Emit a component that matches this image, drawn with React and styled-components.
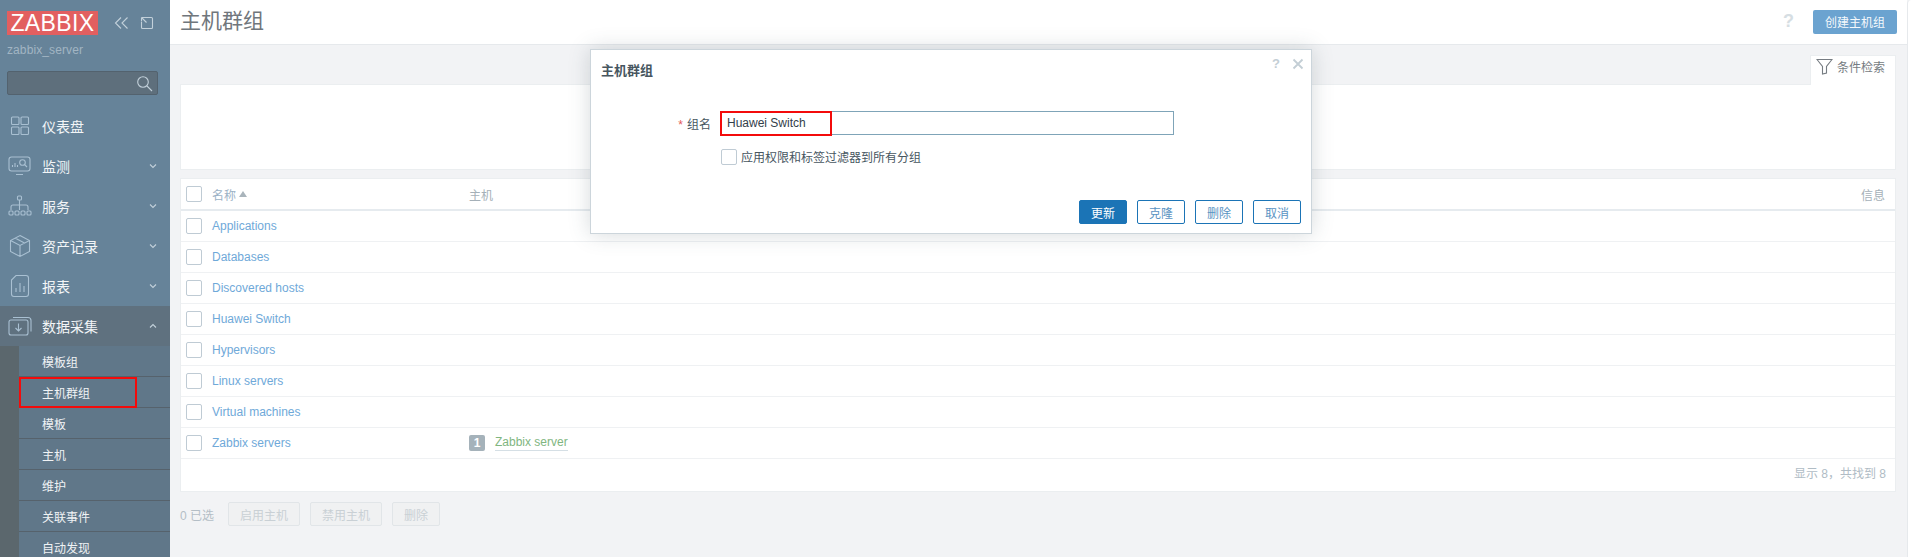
import React from "react";
import styled, { createGlobalStyle } from "styled-components";

const GlobalStyle = createGlobalStyle`
  html, body { margin: 0; padding: 0; height: 100%; overflow: hidden; }
  body { font-family: "Liberation Sans", "Noto Sans CJK SC", sans-serif; font-size: 12px; }
  * { box-sizing: border-box; }
`;

const Page = styled.div`
  position: relative;
  display: flex;
  width: 1911px;
  height: 557px;
  overflow: hidden;
  background: #f2f3f5;
`;

const Sidebar = styled.aside`
  width: 170px;
  flex: none;
  height: 557px;
  overflow: hidden;
  background: #668399;
  color: #fff;
`;
const LogoRow = styled.div`
  display: flex;
  align-items: center;
  padding: 11px 0 0 7px;
  height: 35px;
`;
const Logo = styled.div`
  width: 91px;
  height: 24px;
  background: #e25f60;
  color: #fff;
  font-size: 23px;
  line-height: 25px;
  text-align: center;
  letter-spacing: 0.4px;
  overflow: hidden;
`;
const LogoTools = styled.div`
  display: flex;
  gap: 11px;
  margin-left: 16px;
  color: #c2d0da;
`;
const ServerName = styled.div`
  margin: 8px 0 0 7px;
  font-size: 12px;
  line-height: 14px;
  color: #a2b5c3;
  letter-spacing: 0.1px;
`;
const SearchBox = styled.div`
  display: flex;
  align-items: center;
  justify-content: flex-end;
  width: 151px;
  height: 24px;
  margin: 14px 0 0 7px;
  padding-right: 4px;
  background: #5e6f7c;
  border: 1px solid #53626e;
  border-radius: 2px;
  color: #c2d0da;
`;
const Nav = styled.nav`
  margin-top: 11px;
`;
const NavItem = styled.div`
  display: flex;
  align-items: center;
  height: 40px;
  padding-left: 8px;
  background: ${(p) => (p.$active ? "#5f717f" : "transparent")};
  color: #f2f5f7;
  font-size: 14px;
`;
const NavIcon = styled.span`
  display: flex;
  justify-content: center;
  width: 24px;
  margin-right: 10px;
  color: #a9c0d2;
`;
const NavLabel = styled.span`
  flex: 1;
`;
const Caret = styled.span`
  display: flex;
  margin-right: 13px;
  color: #c2d0da;
`;
const SubMenu = styled.div`
  border-left: 19px solid #5b676d;
  background: #607789;
`;
const SubItem = styled.div`
  position: relative;
  display: flex;
  align-items: center;
  height: 31px;
  padding-left: 23px;
  border-bottom: 1px solid #56626c;
  color: #f0f3f5;
  font-size: 12px;
`;
const SideMark = styled.span`
  position: absolute;
  left: 0;
  top: 0;
  width: 118px;
  height: 31px;
  border: 2px solid #f30b0b;
`;

const Main = styled.main`
  flex: 1;
  display: flex;
  flex-direction: column;
  min-width: 0;
`;
const TopBar = styled.header`
  display: flex;
  align-items: center;
  height: 45px;
  padding: 0 10px 1px 10px;
  background: #fff;
  border-bottom: 1px solid #e6e9ec;
`;
const Title = styled.h1`
  flex: 1;
  margin: 0 0 2px;
  font-size: 21px;
  line-height: 30px;
  font-weight: 400;
  color: #70767c;
`;
const HelpMark = styled.span`
  margin-right: 19px;
  color: #d6dee3;
  font-size: 18px;
  font-weight: 700;
`;
const CreateButton = styled.button`
  width: 84px;
  height: 24px;
  padding: 0;
  border: 0;
  border-radius: 2px;
  background: #6ba3d0;
  color: #f5f9fc;
  font: inherit;
  font-size: 12px;
`;
const Content = styled.div`
  padding: 10px 11px 0 10px;
`;
const FilterTabRow = styled.div`
  display: flex;
  justify-content: flex-end;
`;
const FilterTab = styled.div`
  display: flex;
  align-items: center;
  gap: 4px;
  width: 86px;
  height: 30px;
  margin-bottom: -1px;
  padding: 0 0 8px 5px;
  background: #fff;
  border: 1px solid #ebeef0;
  border-bottom: 0;
  color: #767c82;
  font-size: 12px;
  z-index: 1;
`;
const FilterBody = styled.div`
  height: 86px;
  background: #fff;
  border: 1px solid #ebeef0;
`;
const Table = styled.section`
  margin-top: 8px;
  background: #fff;
  border: 1px solid #ebeef0;
`;
const HeadRow = styled.div`
  display: grid;
  grid-template-columns: 26px 257px 1fr auto;
  align-items: center;
  height: 32px;
  padding: 0 10px 0 5px;
  border-bottom: 2px solid #e6ebef;
  color: #a5b0b8;
`;
const Row = styled.div`
  display: grid;
  grid-template-columns: 26px 257px 1fr;
  align-items: center;
  height: 31px;
  padding: 0 10px 0 5px;
  border-bottom: 1px solid #eff1f3;
`;
const Check = styled.span`
  display: block;
  width: 16px;
  height: 16px;
  background: #fff;
  border: 1px solid #bfcbd4;
  border-radius: 2px;
`;
const SortName = styled.span`
  display: flex;
  align-items: center;
  gap: 3px;
  color: #9cb2c6;
`;
const SortArrow = styled.span`
  width: 0;
  height: 0;
  border: 4px solid transparent;
  border-top: 0;
  border-bottom: 6px solid #a9b4bb;
`;
const NameLink = styled.a`
  color: #6fa9d9;
`;
const HostCell = styled.span`
  display: flex;
  align-items: center;
  gap: 10px;
`;
const Count = styled.span`
  width: 16px;
  height: 16px;
  background: #a5b2ba;
  border-radius: 2px;
  color: #fff;
  font-weight: 700;
  line-height: 16px;
  text-align: center;
`;
const HostLink = styled.a`
  color: #7fb67f;
  border-bottom: 1px solid #d5dfe5;
  line-height: 15px;
`;
const Paging = styled.div`
  height: 32px;
  padding-right: 9px;
  color: #b0bcc5;
  line-height: 31px;
  text-align: right;
`;
const ActionBar = styled.div`
  display: flex;
  align-items: center;
  gap: 10px;
  margin-top: 10px;
  color: #b4bec6;
`;
const SelectedCount = styled.span`
  margin-right: 4px;
`;
const DisabledButton = styled.button`
  width: ${(p) => p.$w}px;
  height: 24px;
  padding: 0;
  background: #f0f1f2;
  border: 1px solid #e1e5e8;
  border-radius: 2px;
  color: #c9d0d5;
  font: inherit;
`;
const Scrollbar = styled.div`
  width: 4px;
  flex: none;
  background: #fff;
  border-left: 1px solid #e6e9ec;
  border-top-left-radius: 6px;
`;

const Dialog = styled.div`
  position: absolute;
  left: 590px;
  top: 49px;
  display: flex;
  flex-direction: column;
  width: 722px;
  height: 185px;
  background: #fff;
  border: 1px solid #ccd5db;
  box-shadow: 0 0 20px rgba(70, 85, 95, 0.22);
`;
const DialogHead = styled.div`
  position: relative;
  padding: 12px 10px 0;
  height: 44px;
`;
const DialogTitle = styled.h2`
  margin: 0;
  font-size: 13px;
  line-height: 17px;
  font-weight: 700;
  color: #47565f;
`;
const DialogTools = styled.div`
  position: absolute;
  right: 7px;
  top: 6px;
  display: flex;
  align-items: center;
  gap: 12px;
  color: #c3ced5;
`;
const DialogHelp = styled.span`
  font-size: 13px;
  font-weight: 700;
`;
const FormRow = styled.div`
  display: grid;
  grid-template-columns: 120px 454px;
  column-gap: 9px;
  align-items: center;
  margin-top: ${(p) => p.$top || 0}px;
`;
const Label = styled.label`
  color: #47565f;
  text-align: right;
`;
const Required = styled.span`
  color: #e45959;
  margin-right: 4px;
`;
const FieldWrap = styled.div`
  position: relative;
  height: 24px;
  padding: 0 6px;
  border: 1px solid #7fa4b8;
  color: #33404a;
  line-height: 22px;
`;
const FieldMark = styled.span`
  position: absolute;
  left: -1px;
  top: -1px;
  width: 112px;
  height: 25px;
  border: 2px solid #f30b0b;
`;
const CheckLabel = styled.span`
  display: flex;
  align-items: center;
  gap: 4px;
  padding-left: 1px;
  color: #47565f;
`;
const DialogFoot = styled.div`
  display: flex;
  justify-content: flex-end;
  gap: 10px;
  margin-top: auto;
  padding: 0 10px 9px 0;
`;
const DialogButton = styled.button`
  width: 48px;
  height: 24px;
  padding: 0;
  background: ${(p) => (p.$primary ? "#1b74b6" : "#fff")};
  border: 1px solid #1b74b6;
  border-radius: 2px;
  color: ${(p) => (p.$primary ? "#fff" : "#5a93c2")};
  font: inherit;
`;

const Stroke = ({ size = 24, w = 24, h = 24, children }) => (
  <svg width={w || size} height={h || size} viewBox={`0 0 ${w} ${h}`} fill="none" stroke="currentColor" strokeWidth="1.1">
    {children}
  </svg>
);

const DashboardIcon = () => (
  <Stroke w={20} h={20}>
    <rect x="1.5" y="1" width="7.5" height="7.5" rx="1" />
    <rect x="11" y="1" width="7.5" height="7.5" rx="1" />
    <rect x="1.5" y="11" width="7.5" height="7.5" rx="1" />
    <rect x="11" y="11" width="7.5" height="7.5" rx="1" />
  </Stroke>
);
const MonitorIcon = () => (
  <Stroke w={24} h={20}>
    <rect x="1" y="1" width="21" height="14" rx="2.5" />
    <path d="M8 18.5h7M4.5 11V9M7 11V7M9.5 11V9" />
    <circle cx="14.5" cy="6.5" r="2.8" />
    <path d="M16.5 8.5l2.5 2.5" />
  </Stroke>
);
const ServiceIcon = () => (
  <Stroke w={24} h={22}>
    <rect x="9.5" y="1" width="4" height="4" rx="1" />
    <path d="M11.5 5v5M3 15v-3a2 2 0 012-2h13a2 2 0 012 2v3M11.5 10v5" />
    <rect x="1" y="16" width="4" height="4" rx="1" />
    <rect x="7" y="16" width="4" height="4" rx="1" />
    <rect x="13" y="16" width="4" height="4" rx="1" />
    <rect x="19" y="16" width="4" height="4" rx="1" />
  </Stroke>
);
const BoxIcon = () => (
  <Stroke w={22} h={24}>
    <path d="M11 1.5l9.5 5v11l-9.5 5-9.5-5v-11zM1.5 6.5l9.5 5 9.5-5M11 11.5v11M6 4l9.5 5" />
  </Stroke>
);
const ReportIcon = () => (
  <Stroke w={20} h={24}>
    <path d="M6 1.5h10a2.5 2.5 0 012.5 2.5v16a2.5 2.5 0 01-2.5 2.5H4a2.5 2.5 0 01-2.5-2.5V6z" />
    <path d="M6 18v-4M10 18V9M14 18v-6" />
  </Stroke>
);
const ImportIcon = () => (
  <Stroke w={24} h={20}>
    <rect x="1" y="4" width="19" height="15" rx="2" />
    <path d="M5 1.5h15a3 3 0 013 3v11M10.5 7.5v7.5M7.5 12l3 3 3-3" />
  </Stroke>
);
const Chevron = ({ up }) => (
  <Stroke w={8} h={6}>
    <path d={up ? "M1 4.5l3-3 3 3" : "M1 1.5l3 3 3-3"} />
  </Stroke>
);

const groups = [
  "Applications",
  "Databases",
  "Discovered hosts",
  "Huawei Switch",
  "Hypervisors",
  "Linux servers",
  "Virtual machines",
  "Zabbix servers",
];
const navItems = [
  { label: "仪表盘", icon: <DashboardIcon /> },
  { label: "监测", icon: <MonitorIcon />, caret: true },
  { label: "服务", icon: <ServiceIcon />, caret: true },
  { label: "资产记录", icon: <BoxIcon />, caret: true },
  { label: "报表", icon: <ReportIcon />, caret: true },
];
const subItems = ["模板组", "主机群组", "模板", "主机", "维护", "关联事件", "自动发现"];

export default function App() {
  return (
    <Page>
      <GlobalStyle />
      <Sidebar>
        <LogoRow>
          <Logo>ZABBIX</Logo>
          <LogoTools>
            <Stroke w={15} h={14}>
              <path d="M7 1.5L1.5 7 7 12.5M13.5 1.5L8 7l5.5 5.5" />
            </Stroke>
            <Stroke w={14} h={14}>
              <path d="M4.5 1.5h7a1 1 0 011 1v9a1 1 0 01-1 1h-9a1 1 0 01-1-1V5.5M1.5 1.5L6.5 6.5M1.5 1.5v3.5M1.5 1.5h3.5" />
            </Stroke>
          </LogoTools>
        </LogoRow>
        <ServerName>zabbix_server</ServerName>
        <SearchBox>
          <Stroke w={17} h={17}>
            <circle cx="7" cy="7" r="5.3" />
            <path d="M11 11l5 5" />
          </Stroke>
        </SearchBox>
        <Nav>
          {navItems.map((item) => (
            <NavItem key={item.label}>
              <NavIcon>{item.icon}</NavIcon>
              <NavLabel>{item.label}</NavLabel>
              {item.caret && (
                <Caret>
                  <Chevron />
                </Caret>
              )}
            </NavItem>
          ))}
          <NavItem $active>
            <NavIcon>
              <ImportIcon />
            </NavIcon>
            <NavLabel>数据采集</NavLabel>
            <Caret>
              <Chevron up />
            </Caret>
          </NavItem>
          <SubMenu>
            {subItems.map((label) => (
              <SubItem key={label}>
                {label}
                {label === "主机群组" && <SideMark />}
              </SubItem>
            ))}
          </SubMenu>
        </Nav>
      </Sidebar>

      <Main>
        <TopBar>
          <Title>主机群组</Title>
          <HelpMark>?</HelpMark>
          <CreateButton>创建主机组</CreateButton>
        </TopBar>
        <Content>
          <FilterTabRow>
            <FilterTab>
              <Stroke w={17} h={17}>
                <path d="M1 1.5h15L10.5 8.5v6.5l-4 1V8.5z" />
              </Stroke>
              条件检索
            </FilterTab>
          </FilterTabRow>
          <FilterBody />
          <Table>
            <HeadRow>
              <Check />
              <SortName>
                名称
                <SortArrow />
              </SortName>
              <span>主机</span>
              <span>信息</span>
            </HeadRow>
            {groups.map((name) => (
              <Row key={name}>
                <Check />
                <NameLink>{name}</NameLink>
                {name === "Zabbix servers" && (
                  <HostCell>
                    <Count>1</Count>
                    <HostLink>Zabbix server</HostLink>
                  </HostCell>
                )}
              </Row>
            ))}
            <Paging>显示 8，共找到 8</Paging>
          </Table>
          <ActionBar>
            <SelectedCount>0 已选</SelectedCount>
            <DisabledButton $w={72}>启用主机</DisabledButton>
            <DisabledButton $w={72}>禁用主机</DisabledButton>
            <DisabledButton $w={48}>删除</DisabledButton>
          </ActionBar>
        </Content>
      </Main>
      <Scrollbar />

      <Dialog>
        <DialogHead>
          <DialogTitle>主机群组</DialogTitle>
          <DialogTools>
            <DialogHelp>?</DialogHelp>
            <Stroke w={12} h={12}>
              <path d="M1.5 1.5l9 9M10.5 1.5l-9 9" strokeWidth="1.8" />
            </Stroke>
          </DialogTools>
        </DialogHead>
        <FormRow $top={17}>
          <Label>
            <Required>*</Required>组名
          </Label>
          <FieldWrap>
            Huawei Switch
            <FieldMark />
          </FieldWrap>
        </FormRow>
        <FormRow $top={13}>
          <span />
          <CheckLabel>
            <Check />
            应用权限和标签过滤器到所有分组
          </CheckLabel>
        </FormRow>
        <DialogFoot>
          <DialogButton $primary>更新</DialogButton>
          <DialogButton>克隆</DialogButton>
          <DialogButton>删除</DialogButton>
          <DialogButton>取消</DialogButton>
        </DialogFoot>
      </Dialog>
    </Page>
  );
}
